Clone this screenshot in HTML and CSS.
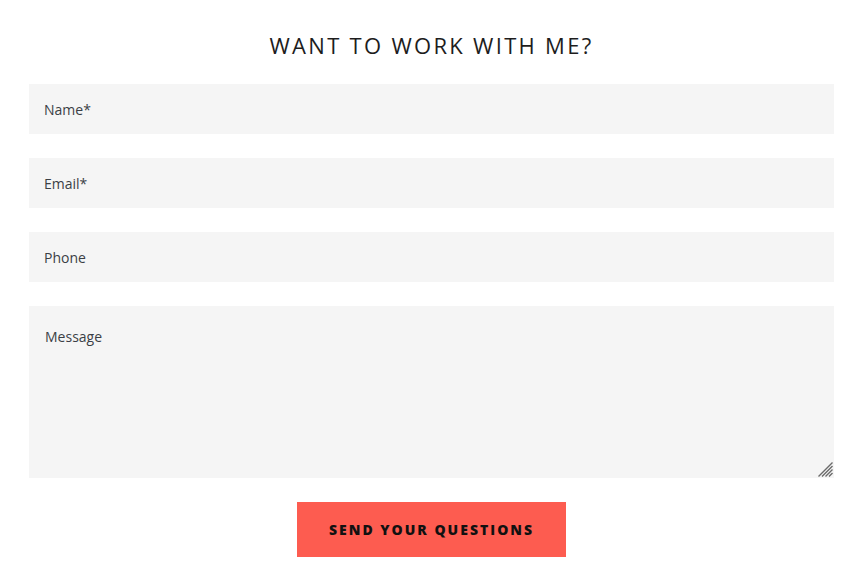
FILE: index.html
```html
<!DOCTYPE html>
<html>
<head>
<meta charset="utf-8">
<link rel="stylesheet" href="styles.css">
</head>
<body>
<section class="contact">
  <h2 class="title">WANT TO WORK WITH ME?</h2>
  <form class="form">
    <input class="field" type="text" placeholder="Name*">
    <input class="field" type="email" placeholder="Email*">
    <input class="field" type="tel" placeholder="Phone">
    <div class="area-wrap">
      <textarea class="field area" placeholder="Message"></textarea>
      <svg class="grip" width="16" height="16" viewBox="0 0 16 16" aria-hidden="true">
        <path d="M15.5 1.5 L1.5 15.5 M15.5 5 L5 15.5 M15.5 8.5 L8.5 15.5 M15.5 12 L12 15.5" stroke="#6b6b6b" stroke-width="1.4" fill="none"/>
      </svg>
    </div>
    <button class="btn" type="button">SEND YOUR QUESTIONS</button>
  </form>
</section>
</body>
</html>
```
FILE: styles.css
```css
html, body {
  margin: 0;
  padding: 0;
  background: #fff;
}
body {
  font-family: "Open Sans", sans-serif;
}
.contact {
  padding: 30px 30px 0 29px;
}
.title {
  margin: 0 0 24px;
  text-align: center;
  font-family: "Open Sans", sans-serif;
  font-weight: 400;
  font-size: 22px;
  line-height: 30px;
  letter-spacing: 2.3px;
  color: #1d1d1d;
}
.form {
  display: flex;
  flex-direction: column;
  gap: 24px;
}
.field {
  box-sizing: border-box;
  display: block;
  width: 100%;
  height: 50px;
  border: 0;
  margin: 0;
  padding: 0 15px;
  background: #f5f5f5;
  font-family: "Open Sans", sans-serif;
  font-size: 14px;
  color: #333;
  outline: none;
}
.field::placeholder {
  color: #3b3f45;
  opacity: 1;
}
.area-wrap {
  position: relative;
}
.area {
  height: 172px;
  padding: 21px 16px;
  resize: none;
}
.grip {
  position: absolute;
  right: 1px;
  bottom: 1px;
  pointer-events: none;
}
.btn {
  align-self: center;
  width: 269px;
  height: 55px;
  border: 0;
  background: #fd5c50;
  color: #111;
  font-family: "Open Sans", sans-serif;
  font-weight: 800;
  font-size: 14px;
  letter-spacing: 2px;
  cursor: pointer;
  padding: 0;
}
```
